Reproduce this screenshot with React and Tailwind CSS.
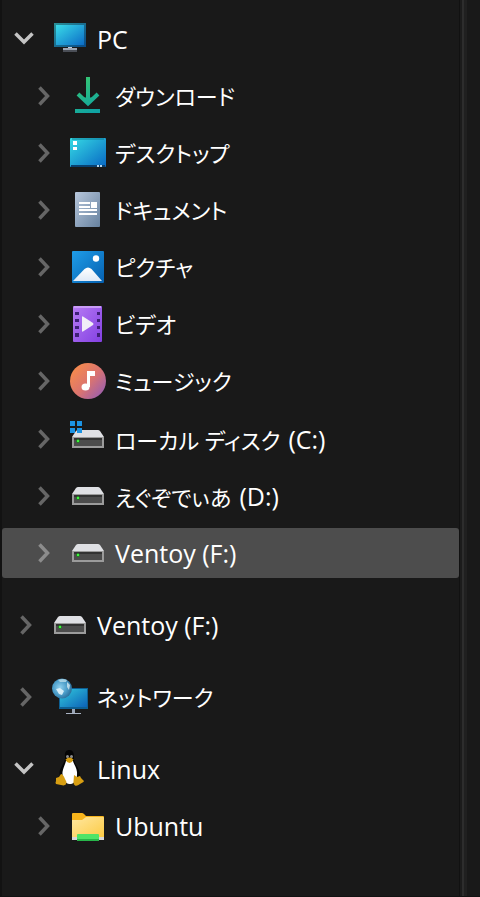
import { useState } from "react";

function Icon({ children }) {
  return (
    <svg viewBox="0 0 36 36" className="size-9 shrink-0 overflow-visible" aria-hidden="true">
      {children}
    </svg>
  );
}

function PcIcon() {
  return (
    <Icon>
      <defs>
        <linearGradient id="pc-screen" x1="0" y1="0" x2="1" y2="1">
          <stop offset="0" stopColor="#39dbe8" />
          <stop offset="1" stopColor="#0c6cc6" />
        </linearGradient>
        <linearGradient id="pc-frame" x1="0" y1="0" x2="1" y2="1">
          <stop offset="0" stopColor="#2a8f96" />
          <stop offset="1" stopColor="#084a88" />
        </linearGradient>
      </defs>
      <rect x="2" y="2" width="32" height="24" fill="url(#pc-frame)" />
      <rect x="4" y="4" width="28" height="20" fill="url(#pc-screen)" />
      <rect x="16" y="26" width="4" height="2" fill="#c2cbd8" />
      <rect x="11" y="27" width="14" height="2" fill="#9ca5b3" />
      <rect x="11" y="29" width="14" height="2" fill="#4a4e56" />
    </Icon>
  );
}

function DownloadIcon() {
  return (
    <Icon>
      <defs>
        <linearGradient id="dl" gradientUnits="userSpaceOnUse" x1="8" y1="0" x2="24" y2="34">
          <stop offset="0" stopColor="#37c871" />
          <stop offset="1" stopColor="#0fa3a3" />
        </linearGradient>
      </defs>
      <path d="M18 -1V26M8 16l10 9.500 10-9.500" fill="none" stroke="url(#dl)" strokeWidth="4" />
      <path d="M12 19.500h12l-6 7z" fill="url(#dl)" />
      <rect x="5" y="31" width="25" height="4" fill="url(#dl)" />
    </Icon>
  );
}

function DesktopIcon() {
  return (
    <Icon>
      <defs>
        <linearGradient id="desk" x1="0" y1="0" x2="1" y2="1">
          <stop offset="0" stopColor="#36dbe4" />
          <stop offset="1" stopColor="#0868c4" />
        </linearGradient>
      </defs>
      <rect y="3" width="36" height="29" rx="1" fill="url(#desk)" />
      <path d="M2 4h32" stroke="#0b7f93" strokeOpacity=".5" strokeWidth="2" />
      <path d="M1 31h34" stroke="#084070" strokeWidth="2" />
      <path d="M3 6h4v4H3zM3 12h4v3H3z" fill="#fff" />
      <path d="M27 30h2v2h-2zM30 30h2v2h-2z" fill="#b5d5ee" />
    </Icon>
  );
}

function DocumentIcon() {
  return (
    <Icon>
      <defs>
        <linearGradient id="doc" x1="0" y1="0" x2="1" y2="1">
          <stop offset="0" stopColor="#b7c7dc" />
          <stop offset="1" stopColor="#67829f" />
        </linearGradient>
      </defs>
      <rect x="5" width="25" height="35" rx="1" fill="url(#doc)" />
      <path d="M9 10h11v2H9zM9 14h11v2H9zM21 10h6v6h-6zM9 17h18v2H9zM9 21h18v2H9z" fill="#fff" />
    </Icon>
  );
}

function PictureIcon() {
  return (
    <Icon>
      <defs>
        <linearGradient id="pic" x1="0" y1="0" x2="1" y2="1">
          <stop offset="0" stopColor="#1f9de8" />
          <stop offset="1" stopColor="#0560b0" />
        </linearGradient>
        <linearGradient id="hill" x1="0" y1="0" x2="0" y2="1">
          <stop offset="0" stopColor="#fff" />
          <stop offset="1" stopColor="#dfeaf7" />
        </linearGradient>
      </defs>
      <rect x="2" y="2" width="32" height="32" rx="1" fill="url(#pic)" />
      <circle cx="26" cy="9.500" r="3.200" fill="#fff" />
      <path d="M3 32 14.500 20q3.500-3 7 0L32 32z" fill="url(#hill)" />
    </Icon>
  );
}

function VideoIcon() {
  return (
    <Icon>
      <defs>
        <linearGradient id="vid" x1="0" y1="0" x2="1" y2="1">
          <stop offset="0" stopColor="#b77bf4" />
          <stop offset="1" stopColor="#8340e2" />
        </linearGradient>
      </defs>
      <rect x="3" width="29" height="36" rx="1" fill="url(#vid)" />
      <path d="M4 1h27" stroke="#c99cf7" strokeWidth="2" />
      <path
        d="M5 6h4v3H5zM5 13h4v3H5zM5 20h4v3H5zM5 27h4v4H5zM27 6h3v3h-3zM27 13h3v3h-3zM27 20h3v3h-3zM27 27h3v4h-3z"
        fill="#3f1f78"
      />
      <path d="M12 11v14q0 1 1 .500L23 19q1-1 0-2L13 10.500q-1-.500-1 .500z" fill="#f1eef7" />
    </Icon>
  );
}

function MusicIcon() {
  return (
    <Icon>
      <defs>
        <linearGradient id="mus" x1="0.100" y1="0.200" x2="0.900" y2="0.900">
          <stop offset="0" stopColor="#f4894f" />
          <stop offset=".5" stopColor="#db7470" />
          <stop offset="1" stopColor="#9c5fae" />
        </linearGradient>
      </defs>
      <circle cx="18" cy="18" r="18" fill="url(#mus)" />
      <ellipse cx="15.500" cy="24" rx="4" ry="3.500" fill="#fff" />
      <path d="M17 8h8v5h-5v11h-3z" fill="#fff" />
    </Icon>
  );
}

function DriveIcon({ system }) {
  return (
    <Icon>
      <path d="M2 16 6 10q1-1 2-1h20q1 0 2 1l4 6z" fill="#dfe0e4" />
      <rect x="2" y="16" width="32" height="11" fill="#9b9b9b" />
      <rect x="4" y="17" width="28" height="8" fill="#4c4c4c" />
      <rect x="4" y="17" width="28" height="2" fill="#333" />
      <path d="M7 18h2v1h1v2H9v1H7v-1H6v-2h1z" fill="#277a27" />
      <rect x="7" y="19" width="2" height="2" fill="#41f041" />
      {system && <path d="M0 0h5v5H0zM7 0h5v5H7zM0 7h5v5H0zM7 7h5v5H7z" fill="#1c94e4" />}
    </Icon>
  );
}

function NetworkIcon() {
  return (
    <Icon>
      <defs>
        <linearGradient id="net" x1="0" y1="0" x2="1" y2="1">
          <stop offset="0" stopColor="#32c8dc" />
          <stop offset="1" stopColor="#0c62b8" />
        </linearGradient>
        <radialGradient id="globe" cx=".4" cy=".45" r=".6">
          <stop offset="0" stopColor="#8fd0ee" />
          <stop offset=".6" stopColor="#4a9cc8" />
          <stop offset="1" stopColor="#2c6f9c" />
        </radialGradient>
      </defs>
      <rect x="7" y="9" width="29" height="21" fill="#0d5f93" />
      <rect x="8" y="10" width="27" height="18" fill="url(#net)" />
      <path d="M20 30h3v4h-3z" fill="#9aa5b5" />
      <path d="M14 34h15v1H14z" fill="#aab4c4" />
      <circle cx="10" cy="9.500" r="10" fill="url(#globe)" />
      <path d="M6 1q5-2 9 0l-1 2H8z" fill="#b9dcea" fillOpacity=".8" />
      <path d="M15 3l3 3-1 5-2-3z" fill="#d3e8f0" fillOpacity=".8" />
      <path d="M4 10l4-1 4 3-2 4-3-1z" fill="#e2f4fb" fillOpacity=".9" />
    </Icon>
  );
}

function TuxIcon() {
  return (
    <Icon>
      <path
        d="M17.500-1C13.500-1 12.500 2 13 6c.300 4-1 5-3 9-2 3-3 6-2 10l4 8h13l3-9c0-4-2-7-4-10-2-4-2-5-2-8 0-4-1-7-4.500-7z"
        fill="#050505"
      />
      <path d="M14 10c-1 4-3 7-3.500 11-.500 6 2 12 7 12s8-4 7.500-12c-.500-5-3-7-4-11z" fill="#fff" />
      <circle cx="15.500" cy="5.500" r="1.500" fill="#8f8f8f" />
      <circle cx="19.500" cy="5.500" r="1.500" fill="#8f8f8f" />
      <path d="M13.500 8.500q4-4 8 0-1 3-4 3.500-3-.500-4-3.500z" fill="#d79e12" />
      <path d="M4 27l3-1 2-3q2 0 4 5l1.500 3q0 3-3 3.500L4 33q-1-1 0-3z" fill="#d79e12" />
      <path d="M22 24l3 2 3-1 1 2 3 3q0 1-4 3-3 2.500-5 1.500-2-1-1.500-4z" fill="#d79e12" />
    </Icon>
  );
}

function FolderIcon() {
  return (
    <Icon>
      <defs>
        <linearGradient id="fold" x1="0" y1="0" x2="1" y2="1">
          <stop offset="0" stopColor="#ffe7a0" />
          <stop offset="1" stopColor="#fccb45" />
        </linearGradient>
      </defs>
      <path d="M2 6q0-1 1-1h9q1 0 2 1l2 2h17q1 0 1 1v6H2z" fill="#f8b51c" />
      <path d="M2 12h10l4-3h17q1 0 1 1v19H2z" fill="url(#fold)" />
      <rect x="2" y="29" width="32" height="3" fill="#d8d8d8" />
      <rect x="7" y="26" width="22" height="7" rx="1" fill="#4fe468" />
      <path d="M7 31h22v1q0 1-1 1H8q-1 0-1-1z" fill="#27b64a" />
    </Icon>
  );
}

const SECTIONS = [
  {
    icon: <PcIcon />,
    latin: "PC",
    children: [
      { icon: <DownloadIcon />, kana: "ダウンロード" },
      { icon: <DesktopIcon />, kana: "デスクトップ" },
      { icon: <DocumentIcon />, kana: "ドキュメント" },
      { icon: <PictureIcon />, kana: "ピクチャ" },
      { icon: <VideoIcon />, kana: "ビデオ" },
      { icon: <MusicIcon />, kana: "ミュージック" },
      { icon: <DriveIcon system />, kana: "ローカル ディスク", latin: "(C:)", firstDrive: true },
      { icon: <DriveIcon />, kana: "えぐぞでぃあ", latin: "(D:)" },
      { icon: <DriveIcon />, latin: "Ventoy (F:)", selected: true },
    ],
  },
  { icon: <DriveIcon />, latin: "Ventoy (F:)" },
  { icon: <NetworkIcon />, kana: "ネットワーク" },
  { icon: <TuxIcon />, latin: "Linux", children: [{ icon: <FolderIcon />, latin: "Ubuntu" }] },
];

function Row({ item, nested, open, onToggle }) {
  return (
    <div
      className={`flex h-[50px] items-center rounded-[3px] ${nested ? "pl-[30px]" : "pl-3"} ${
        item.selected ? "bg-[#4d4d4d]" : ""
      }`}
    >
      <button
        type="button"
        onClick={onToggle}
        aria-expanded={open}
        aria-label={`${item.kana ?? ""} ${item.latin ?? ""}`}
        className="mr-3.5 size-6 shrink-0"
      >
        <svg viewBox="0 0 24 24" className="size-6" fill="none" strokeWidth="3.5" aria-hidden="true">
          {open ? (
            <path d="M1.500 6.500l8.500 8.500L18.500 6.500" stroke="#c4c4c4" />
          ) : (
            <path d="M7.500 3.500l8 8.500-8 8.500" stroke={item.selected ? "#8c8c8c" : "#666666"} />
          )}
        </svg>
      </button>
      <button type="button" className="flex min-w-0 flex-1 items-center gap-[9px] text-left">
        {item.icon}
        <span className="flex items-baseline gap-2 leading-9 whitespace-nowrap">
          {item.kana && <span className="text-[22px] [font-feature-settings:'palt']">{item.kana}</span>}
          {item.latin && <span className="text-[25px]">{item.latin}</span>}
        </span>
      </button>
    </div>
  );
}

function Section({ item }) {
  const [open, setOpen] = useState(Boolean(item.children));
  return (
    <li>
      <Row item={item} open={open} onToggle={() => setOpen(!open)} />
      {open && item.children && (
        <ul className="mt-[7px] flex flex-col gap-[7px]">
          {item.children.map((child) => (
            <li key={`${child.kana}${child.latin}`} className={child.firstDrive ? "pt-px" : ""}>
              <Row item={child} nested open={false} />
            </li>
          ))}
        </ul>
      )}
    </li>
  );
}

export default function App() {
  return (
    <div className="flex min-h-screen border-b border-[#121212] bg-[#191919] font-['Open_Sans','Noto_Sans_CJK_JP',sans-serif] text-white">
      <nav className="min-w-0 flex-1 border-l-2 border-[#121212] pt-3.5">
        <ul className="flex flex-col gap-[22px]">
          {SECTIONS.map((item) => (
            <Section key={`${item.kana}${item.latin}`} item={item} />
          ))}
        </ul>
      </nav>
      <div className="flex w-[21px] shrink-0">
        <div className="w-px bg-[#111111]" />
        <div className="w-0.5 bg-[#1c1c1c]" />
        <div className="w-0.5 bg-[#2d2d2d]" />
        <div className="w-[3px] bg-[#202020]" />
      </div>
    </div>
  );
}
